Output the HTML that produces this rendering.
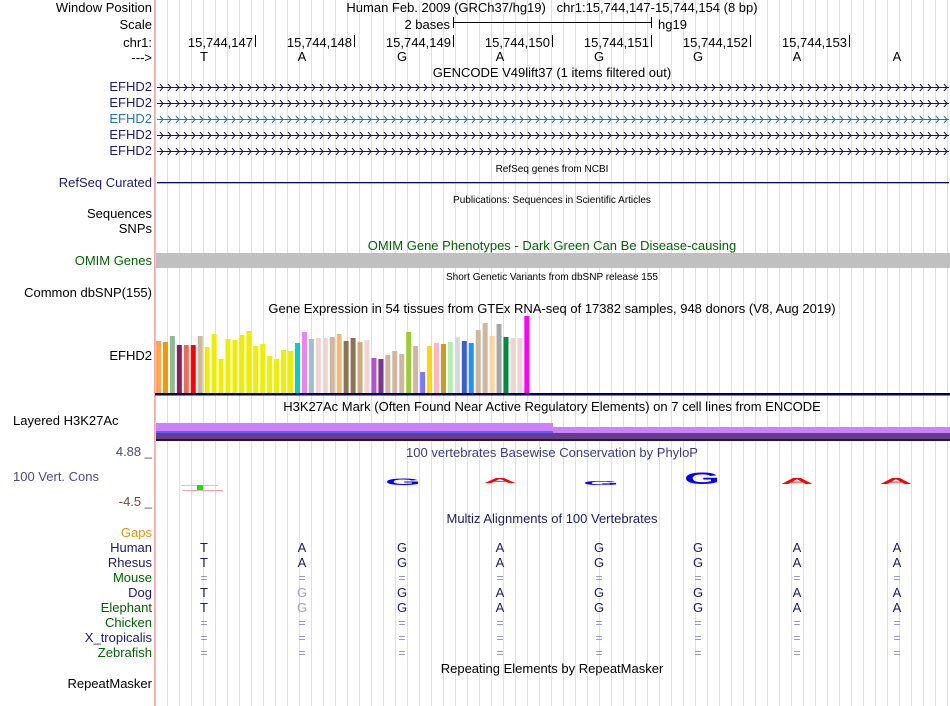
<!DOCTYPE html>
<html><head><meta charset="utf-8"><style>
html,body{margin:0;padding:0;background:#fff;}
svg{display:block;font-family:"Liberation Sans",sans-serif;}
</style></head><body>
<svg width="950" height="706" viewBox="0 0 950 706" xmlns="http://www.w3.org/2000/svg">
<defs>
<pattern id="grid" x="167" y="0" width="12" height="706" patternUnits="userSpaceOnUse">
<rect x="0" y="0" width="1" height="706" fill="#dcdcf6"/>
</pattern>
</defs>
<rect x="155" y="0" width="795" height="706" fill="url(#grid)"/>
<rect x="154" y="0" width="1.5" height="706" fill="#f4a8a8"/>

<g font-size="13" fill="#000">
<g text-anchor="end">
<text x="152" y="12">Window Position</text>
<text x="152" y="29">Scale</text>
<text x="152" y="47">chr1:</text>
<text x="152" y="62">---&gt;</text>
<g fill="#1a1a80"><text x="152" y="91">EFHD2</text><text x="152" y="107">EFHD2</text><text x="152" y="123" fill="#1f78b4">EFHD2</text><text x="152" y="139">EFHD2</text><text x="152" y="155">EFHD2</text></g>
<text x="152" y="187" fill="#1a1a80">RefSeq Curated</text>
<text x="152" y="218">Sequences</text>
<text x="152" y="233">SNPs</text>
<text x="152" y="265" fill="#006400">OMIM Genes</text>
<text x="152" y="297">Common dbSNP(155)</text>
<text x="152" y="360">EFHD2</text>
<text x="152" y="456" fill="#4a4a8c">4.88 _</text>
<text x="152" y="506" fill="#8b3a3a">-4.5 _</text>
<text x="152" y="537" fill="#e8900c">Gaps</text>
<text x="152" y="552" fill="#1a1a70">Human</text>
<text x="152" y="567" fill="#1a1a70">Rhesus</text>
<text x="152" y="582" fill="#006400">Mouse</text>
<text x="152" y="597" fill="#1a1a70">Dog</text>
<text x="152" y="612" fill="#006400">Elephant</text>
<text x="152" y="627" fill="#006400">Chicken</text>
<text x="152" y="642" fill="#1a1a70">X_tropicalis</text>
<text x="152" y="657" fill="#006400">Zebrafish</text>
<text x="152" y="688">RepeatMasker</text>
</g>
<text x="13" y="425">Layered H3K27Ac</text>
<text x="13" y="481" fill="#4a4a8c">100 Vert. Cons</text>

<text x="552" y="12" text-anchor="middle" xml:space="preserve">Human Feb. 2009 (GRCh37/hg19)   chr1:15,744,147-15,744,154 (8 bp)</text>
<text x="450" y="29" text-anchor="end">2 bases</text>
<rect x="453" y="22" width="199" height="1" fill="#000"/>
<rect x="453" y="17" width="1" height="11" fill="#000"/><rect x="651" y="17" width="1" height="11" fill="#000"/>
<text x="658" y="29">hg19</text>
<g text-anchor="end">
<text x="253" y="47">15,744,147</text><text x="352" y="47">15,744,148</text><text x="451" y="47">15,744,149</text><text x="550" y="47">15,744,150</text><text x="649" y="47">15,744,151</text><text x="748" y="47">15,744,152</text><text x="847" y="47">15,744,153</text>
</g>
<g fill="#000"><rect x="255" y="35" width="1" height="12"/><rect x="354" y="35" width="1" height="12"/><rect x="453" y="35" width="1" height="12"/><rect x="552" y="35" width="1" height="12"/><rect x="651" y="35" width="1" height="12"/><rect x="750" y="35" width="1" height="12"/><rect x="849" y="35" width="1" height="12"/></g>
<g text-anchor="middle">
<text x="204" y="61">T</text><text x="302" y="61">A</text><text x="402" y="61">G</text><text x="500" y="61">A</text><text x="599" y="61">G</text><text x="698" y="61">G</text><text x="797" y="61">A</text><text x="897" y="61">A</text>
<text x="552" y="77">GENCODE V49lift37 (1 items filtered out)</text>
<text x="552" y="172" font-size="10">RefSeq genes from NCBI</text>
<text x="552" y="203" font-size="10">Publications: Sequences in Scientific Articles</text>
<text x="552" y="250" fill="#006400">OMIM Gene Phenotypes - Dark Green Can Be Disease-causing</text>
<text x="552" y="280" font-size="10">Short Genetic Variants from dbSNP release 155</text>
<text x="552" y="313">Gene Expression in 54 tissues from GTEx RNA-seq of 17382 samples, 948 donors (V8, Aug 2019)</text>
<text x="552" y="411">H3K27Ac Mark (Often Found Near Active Regulatory Elements) on 7 cell lines from ENCODE</text>
<text x="552" y="457" fill="#3a3a8c">100 vertebrates Basewise Conservation by PhyloP</text>
<text x="552" y="523" fill="#1a1a70">Multiz Alignments of 100 Vertebrates</text>
<text x="552" y="673">Repeating Elements by RepeatMasker</text>
</g>
</g>

<g id="genes"></g>
<rect x="157" y="182" width="792" height="1.3" fill="#000080"/>
<rect x="156" y="253" width="794" height="15" fill="#c0c0c0"/>

<g id="gtex"></g>
<rect x="155" y="393" width="795" height="2.5" fill="#000066"/>

<rect x="156" y="423" width="397" height="9" fill="#cc80ff"/>
<rect x="156" y="431" width="397" height="2" fill="#6060ff"/>
<rect x="553" y="427" width="397" height="6" fill="#cc80ff"/>
<rect x="156" y="433" width="794" height="6" fill="#663d88"/>
<rect x="156" y="439" width="794" height="2" fill="#2a1050"/>

<rect x="181" y="485" width="37" height="1" fill="#80ff80"/>
<rect x="183" y="490" width="40" height="1" fill="#f0a0a0"/>
<rect x="197" y="485" width="6" height="5" fill="#00ee00"/>
<g font-family="Liberation Sans,sans-serif" font-weight="bold" text-anchor="middle">
<text transform="translate(403,485) scale(2.3,0.45)" font-size="20" fill="#0000ff">G</text>
<text transform="translate(500,483) scale(2.3,0.35)" font-size="20" fill="#ff0000">A</text>
<text transform="translate(601,485) scale(2.3,0.28)" font-size="20" fill="#0000ff">G</text>
<text transform="translate(702,484) scale(2.3,0.85)" font-size="20" fill="#0000ff">G</text>
<text transform="translate(797,484) scale(2.3,0.4)" font-size="20" fill="#ff0000">A</text>
<text transform="translate(896,484) scale(2.3,0.4)" font-size="20" fill="#ff0000">A</text>
</g>

<g font-size="13" text-anchor="middle" fill="#1a1a70"><g id="mz"></g></g>
<script>
(function(){
var ns="http://www.w3.org/2000/svg";
var gg=document.getElementById("genes");
[[87,"#14146e"],[103,"#14146e"],[119,"#1f78b4"],[135,"#14146e"],[151,"#14146e"]].forEach(function(r){
var y=r[0],d="M157,"+(y+0.5)+"H949";
for(var x=160;x<946;x+=8){d+="M"+x+","+(y-3)+"L"+(x+3)+","+(y+0.5)+"L"+x+","+(y+4);}
var p=document.createElementNS(ns,"path");p.setAttribute("d",d);p.setAttribute("stroke",r[1]);p.setAttribute("fill","none");p.setAttribute("stroke-width","1");gg.appendChild(p);});
var cols=["#ffa54f","#ee9a00","#8fbc8f","#8b1c62","#ee6a50","#ff0000","#cdb79e","#eeee00","#eeee00","#eeee00","#eeee00","#eeee00","#eeee00","#eeee00","#eeee00","#eeee00","#eeee00","#eeee00","#eeee00","#eeee00","#00ced1","#ee82ee","#9ac0cd","#eed5d2","#eed5d2","#cdb79e","#eebb77","#8b7355","#8b7355","#cdaa7d","#eed5d2","#b452cd","#7a378b","#cdb79e","#cdb79e","#cdb79e","#9acd32","#cdb79e","#7777ff","#ffd700","#ffb6c1","#cd9b1d","#b4eeb4","#d9d9d9","#3a5fcd","#1e90ff","#cdb79e","#cdb79e","#ffd39b","#a6a6a6","#008b45","#eed5d2","#eed5d2","#ff00ff"];
var tops=[341,342,336,345,345,345,336,347,334,359,339,340,335,331,346,344,356,359,350,351,343,332,339,338,338,337,334,341,338,342,340,358,359,355,351,354,332,346,372,346,343,344,342,337,341,343,330,323,336,324,337,338,338,316];
var g=document.getElementById("gtex");
for(var i=0;i<54;i++){var r=document.createElementNS(ns,"rect");r.setAttribute("x",156+i*6.95);r.setAttribute("y",tops[i]);r.setAttribute("width",5);r.setAttribute("height",393-tops[i]);r.setAttribute("fill",cols[i]);g.appendChild(r);}
var xs=[204,302,402,500,599,698,797,897];
var rows=[["TAGAGGAA",552],["TAGAGGAA",567],["========",582],["TGGAGGAA",597],["TGGAGGAA",612],["========",627],["========",642],["========",657]];
var m=document.getElementById("mz");
rows.forEach(function(rw,ri){for(var k=0;k<8;k++){var t=document.createElementNS(ns,"text");var c=rw[0][k];t.setAttribute("x",xs[k]);t.setAttribute("y",rw[1]);t.textContent=c;
if(c=="="){t.setAttribute("fill","#8a8ac8");t.setAttribute("font-size","12");}
else if((ri==3||ri==4)&&k==1){t.setAttribute("fill","#a0a0c0");}
m.appendChild(t);}});
})();
</script>
</svg>
</body></html>
